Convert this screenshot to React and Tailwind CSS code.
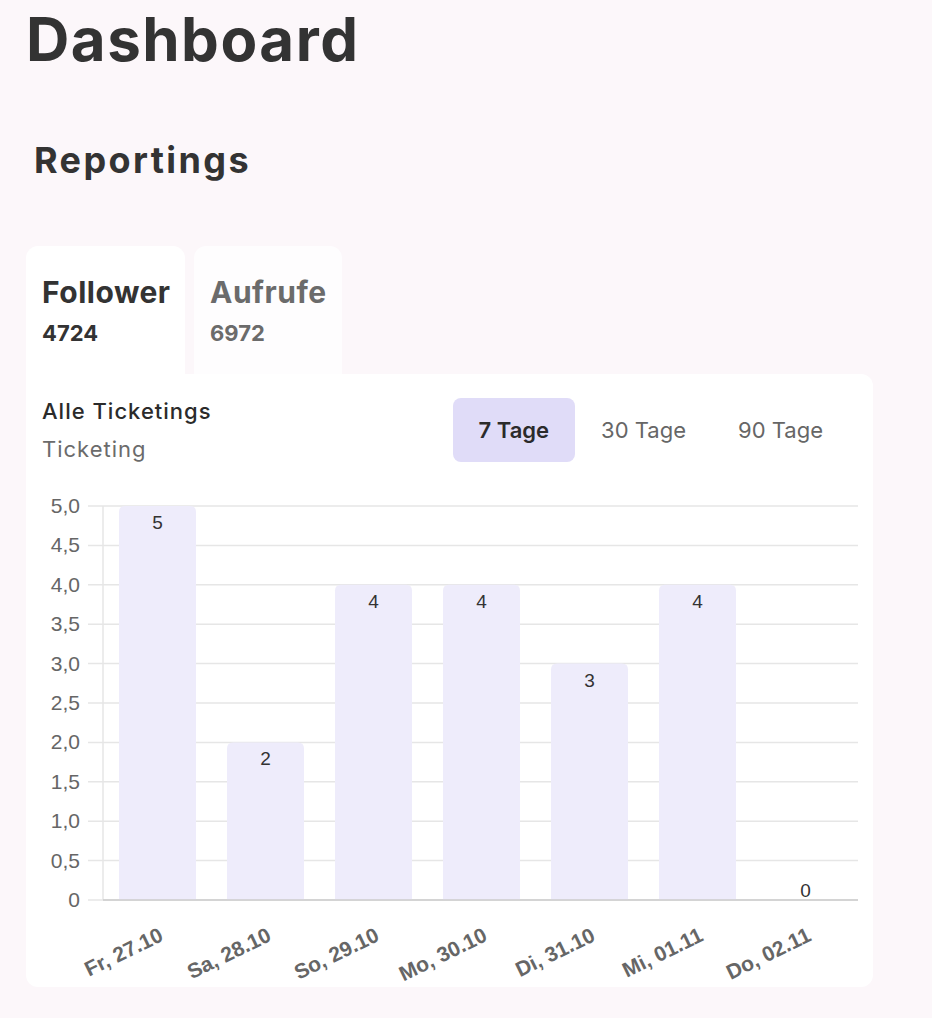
import React from "react";

const days = [
  { label: "Fr, 27.10", value: 5 },
  { label: "Sa, 28.10", value: 2 },
  { label: "So, 29.10", value: 4 },
  { label: "Mo, 30.10", value: 4 },
  { label: "Di, 31.10", value: 3 },
  { label: "Mi, 01.11", value: 4 },
  { label: "Do, 02.11", value: 0 },
];

const ticks = ["0", "0,5", "1,0", "1,5", "2,0", "2,5", "3,0", "3,5", "4,0", "4,5", "5,0"];

const BASE = 900;
const STEP = 39.4;

const barPath = (x, top, w) => {
  const r = 6;
  if (BASE - top < r) return "";
  return `M${x},${BASE} L${x},${top + r} Q${x},${top} ${x + r},${top} L${x + w - r},${top} Q${x + w},${top} ${x + w},${top + r} L${x + w},${BASE} Z`;
};

const Chart = () => (
  <svg width="847" height="517" className="block">
    <g transform="translate(-26,-470)" fontFamily="'Liberation Sans', Arial, sans-serif">
      {ticks.map((t, i) => {
        const y = BASE - i * STEP;
        return (
          <g key={t}>
            <line x1="88" x2="858" y1={y} y2={y} stroke="#e6e6e6" strokeWidth="1.5" />
            <text x="80" y={y + 7} textAnchor="end" fontSize="21" fill="#666">
              {t}
            </text>
          </g>
        );
      })}
      <line x1="103" x2="103" y1={BASE - 10 * STEP} y2={BASE} stroke="#e6e6e6" strokeWidth="1.5" />
      {days.map((d, i) => {
        const x = 119 + i * 108;
        const top = BASE - d.value * 2 * STEP;
        const cx = x + 38.5;
        return (
          <g key={d.label}>
            <path d={barPath(x, top, 77)} fill="#eeecfb" />
            <text x={cx} y={d.value === 0 ? 897 : top + 23} textAnchor="middle" fontSize="19" fill="#333">
              {d.value}
            </text>
            <text
              x={cx + 7}
              y={940}
              textAnchor="end"
              fontSize="21"
              fontWeight="bold"
              fill="#666"
              transform={`rotate(-26 ${cx + 7} 940)`}
            >
              {d.label}
            </text>
          </g>
        );
      })}
      <line x1="103" x2="858" y1={BASE} y2={BASE} stroke="#cccccc" strokeWidth="1.5" />
    </g>
  </svg>
);

export default function App() {
  const ranges = ["7 Tage", "30 Tage", "90 Tage"];
  return (
    <div
      className="min-h-[1018px] bg-[#fcf7fa] px-[26px] pt-[9px] text-[#333]"
      style={{ fontFamily: "Inter, 'Noto Sans', sans-serif" }}
    >
      <h1 className="text-[60px] font-bold leading-none tracking-[1.5px]">Dashboard</h1>

      <h2 className="ml-2 mt-[73px] text-[36px] font-bold leading-none tracking-[2.4px]">Reportings</h2>

      <div className="mt-[68px] w-[847px]">
        {/* Tabs */}
        <div className="flex gap-[9px]">
          <div className="w-[159px] rounded-t-xl bg-white px-4 pb-[30px] pt-[31px]">
            <div className="text-[30px] font-bold leading-none tracking-[0.5px]">Follower</div>
            <div className="mt-[15px] text-[22px] font-bold leading-none">4724</div>
          </div>
          <div className="w-[148px] rounded-t-xl bg-[#fefdfe] px-4 pb-[30px] pt-[31px] text-[#6b6b6b]">
            <div className="text-[30px] font-bold leading-none tracking-[0.5px]">Aufrufe</div>
            <div className="mt-[15px] text-[22px] font-bold leading-none">6972</div>
          </div>
        </div>

        {/* Card */}
        <div className="rounded-b-xl rounded-tr-xl bg-white">
          <div className="flex items-start justify-between pl-4 pr-6 pt-6">
            <div>
              <div className="text-[22px] font-medium leading-[26px] tracking-[1px] text-[#2b2b2b]">
                Alle Ticketings
              </div>
              <div className="mt-[12px] text-[22px] leading-[26px] tracking-[1px] text-[#6b6b6b]">Ticketing</div>
            </div>
            <div className="flex">
              {ranges.map((r, i) => (
                <button
                  key={r}
                  className={
                    i === 0
                      ? "h-16 rounded-lg bg-[#e0dcf8] px-[26px] text-[22px] font-semibold text-[#2b2b2b]"
                      : "h-16 rounded-lg px-[26px] text-[22px] text-[#666]"
                  }
                >
                  {r}
                </button>
              ))}
            </div>
          </div>
          <div className="mt-[8px]">
            <Chart />
          </div>
        </div>
      </div>
    </div>
  );
}
